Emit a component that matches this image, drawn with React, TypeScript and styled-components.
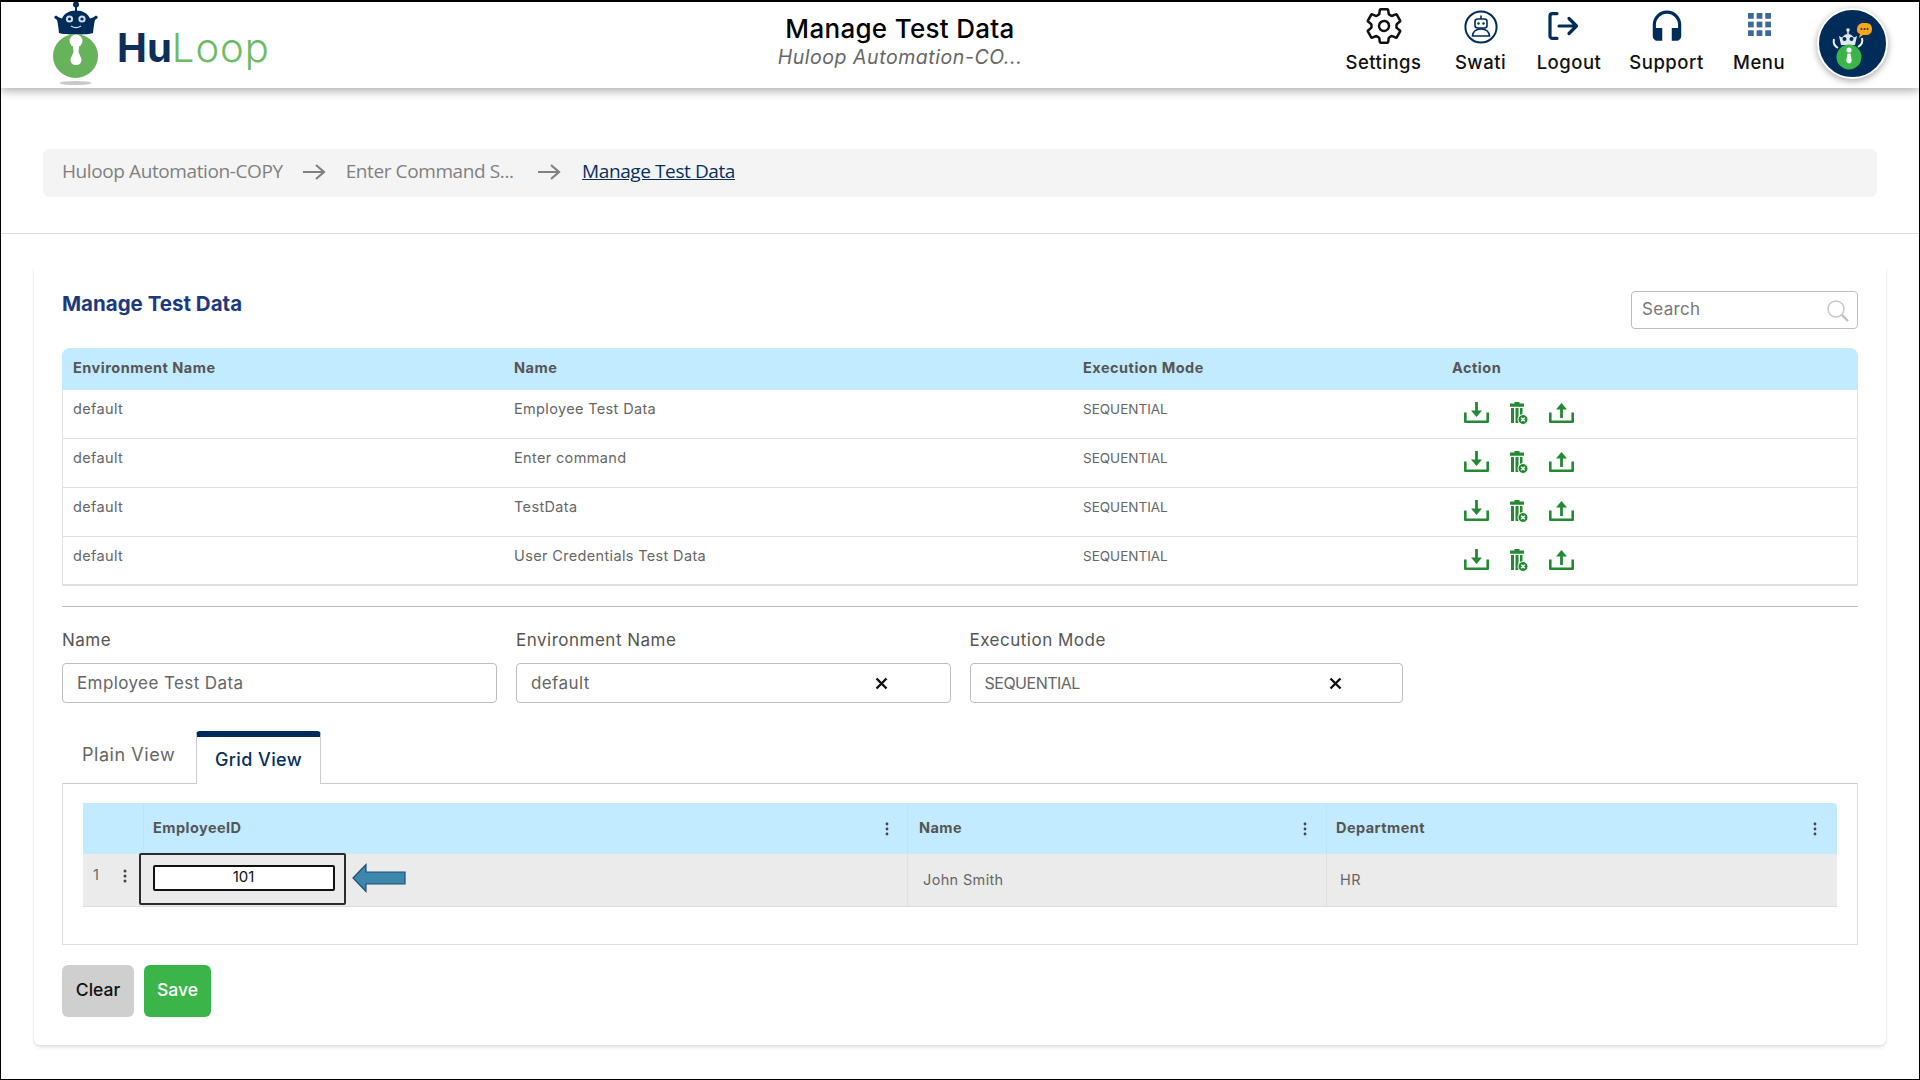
import React from "react";
import styled, { createGlobalStyle } from "styled-components";
import { IoSettingsOutline } from "react-icons/io5";
import { MdHeadset } from "react-icons/md";

const Global = createGlobalStyle`
  html, body { margin: 0; padding: 0; background: #fff; }
  * { box-sizing: border-box; }
  body { font-family: Inter, "Open Sans", sans-serif; }
`;

const NAVY = "#002c5a";
const GREEN = "#238a33";

const Page = styled.div`
  width: 1920px; height: 1080px; border: 1px solid #000; border-top-width: 2px; overflow: hidden;
  display: flex; flex-direction: column; background: #fff;
`;
const Header = styled.header`
  height: 86px; flex: none; display: flex; align-items: flex-start; background: #fff;
  position: relative; z-index: 2; box-shadow: 0 3px 9px rgba(0,0,0,.32); padding-left: 52px;
`;
const LogoBox = styled.div`width: 647px; height: 86px; display: flex; align-items: flex-start;`;
const LogoMark = styled.svg`width: 50px; height: 86px; flex: none;`;
const LogoWord = styled.div`
  margin: 26px 0 0 14px; font-family: Inter, sans-serif; font-size: 40px; line-height: 40px;
  color: #6cbb64; font-weight: 300; letter-spacing: 1px;
`;
const LogoHu = styled.span`color: #0e2f5c; font-weight: 700; letter-spacing: 0;`;
const TitleBox = styled.div`width: 400px; text-align: center; padding-top: 11px;`;
const TopTitle = styled.div`font-size: 26px; line-height: 31px; font-weight: 500; color: #000; letter-spacing: .3px;`;
const TopSub = styled.div`font-size: 19.5px; line-height: 27px; font-style: italic; color: #666; letter-spacing: .55px;`;
const Nav = styled.nav`margin-left: 245px; display: flex; align-items: flex-start; gap: 32px;`;
const NavItem = styled.div<{ $w: number }>`
  width: ${p => p.$w}px; display: flex; flex-direction: column; align-items: center; height: 86px;
`;
const NavIcon = styled.div<{ $top?: number; $left?: number }>`
  height: 44px; padding-top: ${p => p.$top ?? 8}px; display: flex; justify-content: center; color: ${NAVY};
  margin-left: ${p => p.$left ?? 0}px;
`;
const NavLabel = styled.div`font-size: 18.5px; line-height: 26px; margin-top: 3px; font-weight: 500; color: #111; white-space: nowrap; letter-spacing: .5px;`;
const Avatar = styled.div`
  margin: 6px 0 0 1px; width: 71px; height: 71px; border-radius: 50%; background: ${NAVY};
  border: 2px solid #fff; box-shadow: 0 2px 7px rgba(0,0,0,.35); flex: none; overflow: hidden;
`;
const AvatarArt = styled.svg`width: 67px; height: 67px; display: block;`;

const CrumbSection = styled.div`
  height: 146px; flex: none; padding: 61px 42px 0; border-bottom: 1px solid #dcdcdc;
`;
const Crumbs = styled.div`
  height: 48px; background: #f4f4f4; border-radius: 6px; display: flex; align-items: center; padding: 0 0 5px 19px;
  font-family: "Open Sans", sans-serif; font-size: 19px; letter-spacing: -.4px; color: #808080;
`;
const Crumb = styled.span`white-space: nowrap;`;
const CrumbLink = styled.a`color: #07305f; text-decoration: underline; white-space: nowrap;`;
const CrumbArrow = styled.svg<{ $before: number; $after: number }>`
  width: 24px; height: 20px; margin: 3px ${p => p.$after}px 0 ${p => p.$before}px; flex: none;
`;

const Card = styled.main`
  margin: 33px 33px 0; padding: 24px 28px 0; background: #fff; border-radius: 0 0 6px 6px; height: 778px;
  box-shadow: 0 3px 4px -1px rgba(0,0,0,.14), 1px 0 2px -1px rgba(0,0,0,.1), -1px 0 2px -1px rgba(0,0,0,.1);
`;
const TitleRow = styled.div`display: flex; justify-content: space-between; align-items: flex-start; height: 38px;`;
const H1 = styled.h1`margin: 0; font-size: 20.5px; line-height: 26px; font-weight: 700; color: #1d3a80;`;
const Search = styled.div`
  width: 227px; height: 38px; border: 1px solid #bdbdbd; border-radius: 4px; display: flex; align-items: center;
  justify-content: space-between; padding: 0 8px 2px 10px; font-size: 17px; color: #777; letter-spacing: .35px;
`;
const SearchIcon = styled.svg`width: 23px; height: 23px; margin-top: 2px;`;

const Table = styled.div`margin-top: 19px; border-bottom: 2px solid #e0e0e0;`;
const TRow = styled.div<{ $head?: boolean }>`
  display: grid; grid-template-columns: 441px 569px 369px 1fr;
  height: ${p => (p.$head ? 42 : 49)}px;
  letter-spacing: .35px;
  ${p => (p.$head
    ? `background:#c2ebff; border-radius: 8px 8px 0 0; font-weight:700; color:#555; font-size:14.5px; align-items:center; padding-bottom: 4px; letter-spacing: .5px;`
    : `border: solid #e0e0e0; border-width: 0 1px 1px; color:#666; font-size:14.5px; &:last-child { border-bottom: 0; height: 47px; }`)}
`;
const TCell = styled.div`padding-left: 11px;`;
const BodyCell = styled.div<{ $small?: boolean }>`
  padding: 9px 0 0 10px; line-height: 20px; ${p => (p.$small ? "font-size: 13.5px; letter-spacing: 0;" : "")}
`;
const Actions = styled.div`display: flex; gap: 21px; padding: 12px 0 0 22px;`;
const ActIcon = styled.svg`height: 23px; flex: none; display: block; color: ${GREEN};`;

const Rule = styled.hr`margin: 20px 0 0; border: 0; border-top: 1px solid #bbb;`;
const FormGrid = styled.div`display: grid; grid-template-columns: 435px 434.5px 433.5px; column-gap: 19px; margin-top: 21px;`;
const Label = styled.div`font-size: 17px; line-height: 24px; color: #555; margin-bottom: 11px; letter-spacing: .5px;`;
const Field = styled.div`
  height: 40px; border: 1px solid #bdbdbd; border-radius: 4px; display: flex; align-items: center; position: relative;
  padding-left: 14px; font-size: 17px; color: #666; letter-spacing: .4px;
`;
const CompactValue = styled.span`font-size: 16px; letter-spacing: -.5px;`;
const Clear = styled.svg`position: absolute; left: 358px; top: 13px; width: 13px; height: 13px;`;

const Tabs = styled.div`display: flex; margin-top: 28px; height: 52px; align-items: flex-start;`;
const TabPlain = styled.div`width: 134px; padding: 12px 0 0 20px; font-size: 18px; line-height: 24px; color: #666; letter-spacing: .55px;`;
const TabActive = styled.div`
  width: 125px; height: 53px; border: 1px solid #ccc; border-top: 6px solid ${NAVY}; border-bottom: 0; border-radius: 4px 4px 0 0;
  background: #fff; position: relative; z-index: 1; text-align: center; padding-top: 11px; font-size: 18px; line-height: 24px;
  font-weight: 500; color: #07305f; letter-spacing: .4px;
`;
const Panel = styled.div`
  height: 162px; border: 1px solid #ddd; border-top-color: #ccc; padding: 19px 20px 0;
`;
const GHead = styled.div`
  display: grid; grid-template-columns: 60px 764px 419px 1fr; height: 51px; background: #c2ebff; border-radius: 0 4px 0 0;
  color: #555; font-weight: 700; font-size: 14.5px; letter-spacing: .45px;
`;
const GHCell = styled.div`
  border-left: 1px solid #b9e5fa; display: flex; align-items: center; justify-content: space-between;
  padding: 0 18px 2px 9px; &:first-child { border-left: 0; } &:nth-child(3) { padding-left: 11px; padding-right: 19px; }
  &:nth-child(4) { padding-left: 9px; padding-right: 20px; }
`;
const Dots = styled.svg`width: 4px; height: 14px; flex: none; margin-top: 2px;`;
const GRow = styled.div`
  position: relative; display: grid; grid-template-columns: 60px 764px 419px 1fr; height: 53px; background: #ebebeb;
  border-bottom: 1px solid #ddd; font-size: 14.5px; color: #666; letter-spacing: .35px;
`;
const GCell = styled.div`
  border-left: 1px solid #e0e0e0; padding: 16px 0 0 15px; line-height: 20px;
  &:first-child { border-left: 0; padding: 11px 0 0 10px; display: flex; gap: 24px; }
  &:nth-child(4) { padding-left: 13px; }
`;
const RowDots = styled(Dots)`margin-top: 4px;`;
const Highlight = styled.div`
  position: absolute; left: 56px; top: -1px; width: 207px; height: 52px; border: 2px solid #2c2c2c; border-radius: 2px;
  background: #ebebeb; display: flex; align-items: center; justify-content: center; padding: 0 0 3px 2px;
`;
const CellInput = styled.div`
  width: 182px; height: 26px; background: #fff; border: 2px solid #111; border-radius: 2px; display: flex; align-items: center;
  justify-content: center; font-size: 15px; color: #111; letter-spacing: 0; padding-bottom: 2px;
`;
const ArrowMark = styled.svg`position: absolute; left: 269px; top: 9px; width: 54px; height: 30px;`;

const Buttons = styled.div`display: flex; gap: 10px; margin-top: 20px;`;
const Btn = styled.button<{ $save?: boolean }>`
  height: 52px; width: ${p => (p.$save ? 67 : 72)}px; border: 0; border-radius: 6px; padding: 0 0 4px;
  background: ${p => (p.$save ? "#3bb54a" : "#cfcfcf")}; color: ${p => (p.$save ? "#fff" : "#111")};
  font-family: Inter, sans-serif; font-size: 17.5px; font-weight: 500;
`;

const Download = () => (
  <ActIcon viewBox="0 0 25 23" width={25} fill="none">
    <path d="M1.3 10.5v9.300h22.400v-9.300" stroke="currentColor" strokeWidth="2.600" strokeLinejoin="round" />
    <path d="M12.500 0v9" stroke="currentColor" strokeWidth="2.800" />
    <path d="M7 8.500h11L12.500 15z" fill="currentColor" />
  </ActIcon>
);
const Upload = () => (
  <ActIcon viewBox="0 0 25 23" width={25} fill="none">
    <path d="M1.3 10.5v9.300h22.400v-9.300" stroke="currentColor" strokeWidth="2.600" strokeLinejoin="round" />
    <path d="M12.500 7v9" stroke="currentColor" strokeWidth="2.800" />
    <path d="M7 7.500h11L12.500 1z" fill="currentColor" />
  </ActIcon>
);
const Trash = () => (
  <ActIcon viewBox="0 0 18 23" width={18} fill="none">
    <path d="M4.500 0h5v1.500H14v3.300H0V1.500h4.500z" fill="currentColor" />
    <rect x="1" y="6" width="3" height="15" fill="currentColor" />
    <rect x="5.500" y="6" width="3" height="15" fill="currentColor" />
    <rect x="10" y="6" width="2.500" height="7" fill="currentColor" />
    <circle cx="13" cy="17.500" r="5" fill="currentColor" stroke="#fff" strokeWidth="1" />
    <path d="M11.200 15.700l3.600 3.600M14.800 15.700l-3.600 3.600" stroke="#fff" strokeWidth="1.500" />
  </ActIcon>
);
const Actions3 = () => (
  <Actions><Download /><Trash /><Upload /></Actions>
);
const VDots = ({ c = "#444" }: { c?: string }) => (
  <Dots viewBox="0 0 4 14"><circle cx="2" cy="2" r="1.400" fill={c} /><circle cx="2" cy="7" r="1.400" fill={c} /><circle cx="2" cy="12" r="1.400" fill={c} /></Dots>
);
const Arrow = ({ before, after }: { before: number; after: number }) => (
  <CrumbArrow $before={before} $after={after} viewBox="0 0 24 20" fill="none">
    <path d="M1 10h21M14 3l8 7-8 7" stroke="#808080" strokeWidth="2.200" />
  </CrumbArrow>
);
const X = () => (
  <Clear viewBox="0 0 13 13"><path d="M1.500 1.500l10 10M11.500 1.500l-10 10" stroke="#111" strokeWidth="2.400" /></Clear>
);

const rows = ["Employee Test Data", "Enter command", "TestData", "User Credentials Test Data"];

export default function App() {
  return (
    <Page>
      <Global />
      <Header>
        <LogoBox>
          <LogoMark viewBox="53 2 50 86">
            <circle cx="76" cy="4.500" r="3" fill={NAVY} />
            <rect x="75" y="6" width="2" height="5" fill={NAVY} />
            <path d="M59 33c-.5-5-1-9-2-13l-2-1.500-1-1.500 2-1.500 3 2 3 1c2-5 7-8 14-8s12 3 14 8l3-1 3-2 2 1.500-1 1.500-2 1.500c-1 4-1.500 8-2 13-5 2-29 2-34 0z" fill={NAVY} />
            <circle cx="69.500" cy="19" r="3.600" fill="#cfe0ea" /><circle cx="82" cy="19" r="3.600" fill="#cfe0ea" />
            <circle cx="69.500" cy="19" r="1.600" fill={NAVY} /><circle cx="82" cy="19" r="1.600" fill={NAVY} />
            <path d="M71 26c3 2 7 2 10 0" stroke="#cfe0ea" strokeWidth="1.200" fill="none" />
            <ellipse cx="75.500" cy="56" rx="22.500" ry="22" fill="#66b35c" />
            <circle cx="76" cy="41" r="6.500" fill="#fff" />
            <path d="M73 47h6l-.5 5 3 7c0 4-2 6-5.500 6s-5.500-2-5.500-6l3-7z" fill="#fff" />
            <ellipse cx="75.500" cy="83" rx="16" ry="2" fill="#c9c9c9" />
          </LogoMark>
          <LogoWord><LogoHu>Hu</LogoHu>Loop</LogoWord>
        </LogoBox>
        <TitleBox>
          <TopTitle>Manage Test Data</TopTitle>
          <TopSub>Huloop Automation-CO...</TopSub>
        </TitleBox>
        <Nav>
          <NavItem $w={77}>
            <NavIcon $top={4}><IoSettingsOutline size={40} color="#111" /></NavIcon>
            <NavLabel>Settings</NavLabel>
          </NavItem>
          <NavItem $w={53}>
            <NavIcon>
              <svg width="34" height="34" viewBox="0 0 34 34" fill="none">
                <circle cx="17" cy="17" r="15.600" stroke={NAVY} strokeWidth="2" />
                <rect x="11" y="9" width="12" height="9" rx="2.500" stroke={NAVY} strokeWidth="1.600" />
                <path d="M17 5.500V9" stroke={NAVY} strokeWidth="1.600" />
                <circle cx="14.500" cy="13.500" r="1.200" fill={NAVY} /><circle cx="19.500" cy="13.500" r="1.200" fill={NAVY} />
                <path d="M8.500 26c.5-4.500 4-7 8.500-7s8 2.500 8.500 7z" stroke={NAVY} strokeWidth="1.600" />
              </svg>
            </NavIcon>
            <NavLabel>Swati</NavLabel>
          </NavItem>
          <NavItem $w={60}>
            <NavIcon $top={10} $left={-11}>
              <svg width="31" height="28" viewBox="0 0 31 28" fill="none">
                <path d="M9 1.600H4.500a2.500 2.500 0 0 0-2.500 2.500v19.800a2.500 2.500 0 0 0 2.500 2.500H9" stroke={NAVY} strokeWidth="3.200" strokeLinecap="round" />
                <path d="M11 14h17.500M21 6.500l7.500 7.500-7.500 7.500" stroke={NAVY} strokeWidth="3.200" strokeLinecap="round" strokeLinejoin="round" />
              </svg>
            </NavIcon>
            <NavLabel>Logout</NavLabel>
          </NavItem>
          <NavItem $w={71}>
            <NavIcon $top={7}><MdHeadset size={38} color={NAVY} /></NavIcon>
            <NavLabel>Support</NavLabel>
          </NavItem>
          <NavItem $w={50}>
            <NavIcon $top={11}>
              <svg width="23" height="23" viewBox="0 0 24 24" fill="#3d6a9c">
                {[0, 9, 18].flatMap(y => [0, 9, 18].map(x => <rect key={`${x}-${y}`} x={x} y={y} width="6" height="6" />))}
              </svg>
            </NavIcon>
            <NavLabel>Menu</NavLabel>
          </NavItem>
          <Avatar>
            <AvatarArt viewBox="0 0 67 67">
              <path d="M38 20c0-5 3-7 6-7h3c3.500 0 6 2 6 6s-2.500 6-6 6h-3l-4 3 1-4c-2-.7-3-2-3-4z" fill="#f5a81c" />
              <circle cx="42.500" cy="19" r="1" fill="#333" /><circle cx="45.500" cy="19" r="1" fill="#333" /><circle cx="48.500" cy="19" r="1" fill="#333" />
              <circle cx="29" cy="20" r="1.800" fill="#dfe8ef" />
              <path d="M28.200 20h1.600v4h-1.600z" fill="#dfe8ef" />
              <path d="M20 26l3 1.500c2-2.500 4-3.500 6-3.500s4 1 6 3.500l3-1.500-2 9H22z" fill="#dfe8ef" />
              <circle cx="25.500" cy="29" r="2" fill={NAVY} /><circle cx="32.500" cy="29" r="2" fill={NAVY} />
              <path d="M15 29c-1 4 .5 7 4 9M43 28c1 4-.5 7-4 9" stroke="#eef2f6" strokeWidth="2" fill="none" />
              <circle cx="30" cy="47" r="12.500" fill="#3bb54a" />
              <circle cx="30" cy="40" r="2.600" fill="#fff" />
              <path d="M28.500 43.500h3l1.200 6.500c0 2-1 3.500-2.700 3.500s-2.700-1.500-2.700-3.500z" fill="#fff" />
            </AvatarArt>
          </Avatar>
        </Nav>
      </Header>

      <CrumbSection>
        <Crumbs>
          <Crumb>Huloop Automation-COPY</Crumb>
          <Arrow before={19.5} after={19.5} />
          <Crumb>Enter Command S...</Crumb>
          <Arrow before={23.5} after={21} />
          <CrumbLink href="#">Manage Test Data</CrumbLink>
        </Crumbs>
      </CrumbSection>

      <Card>
        <TitleRow>
          <H1>Manage Test Data</H1>
          <Search>
            Search
            <SearchIcon viewBox="0 0 23 23" fill="none">
              <circle cx="10" cy="10" r="8" stroke="#c8c8c8" strokeWidth="1.500" />
              <path d="M16 16l6 6" stroke="#bdbdbd" strokeWidth="2.200" />
            </SearchIcon>
          </Search>
        </TitleRow>

        <Table>
          <TRow $head>
            <TCell>Environment Name</TCell><TCell>Name</TCell><TCell>Execution Mode</TCell><TCell>Action</TCell>
          </TRow>
          {rows.map(r => (
            <TRow key={r}>
              <BodyCell>default</BodyCell>
              <BodyCell>{r}</BodyCell>
              <BodyCell $small>SEQUENTIAL</BodyCell>
              <Actions3 />
            </TRow>
          ))}
        </Table>

        <Rule />

        <FormGrid>
          <div><Label>Name</Label><Field>Employee Test Data</Field></div>
          <div><Label>Environment Name</Label><Field>default<X /></Field></div>
          <div><Label>Execution Mode</Label><Field><CompactValue>SEQUENTIAL</CompactValue><X /></Field></div>
        </FormGrid>

        <Tabs>
          <TabPlain>Plain View</TabPlain>
          <TabActive>Grid View</TabActive>
        </Tabs>
        <Panel>
          <GHead>
            <GHCell />
            <GHCell>EmployeeID<VDots /></GHCell>
            <GHCell>Name<VDots /></GHCell>
            <GHCell>Department<VDots /></GHCell>
          </GHead>
          <GRow>
            <GCell>1<RowDots viewBox="0 0 4 14"><circle cx="2" cy="2" r="1.500" fill="#444" /><circle cx="2" cy="7" r="1.500" fill="#444" /><circle cx="2" cy="12" r="1.500" fill="#444" /></RowDots></GCell>
            <GCell />
            <GCell>John Smith</GCell>
            <GCell>HR</GCell>
            <Highlight><CellInput>101</CellInput></Highlight>
            <ArrowMark viewBox="0 0 54 30">
              <path d="M1 15L14 1.500V9h39v12H14v7.500z" fill="#3f86ad" stroke="#1d4f78" strokeWidth="1.200" />
            </ArrowMark>
          </GRow>
        </Panel>

        <Buttons>
          <Btn>Clear</Btn>
          <Btn $save>Save</Btn>
        </Buttons>
      </Card>
    </Page>
  );
}
